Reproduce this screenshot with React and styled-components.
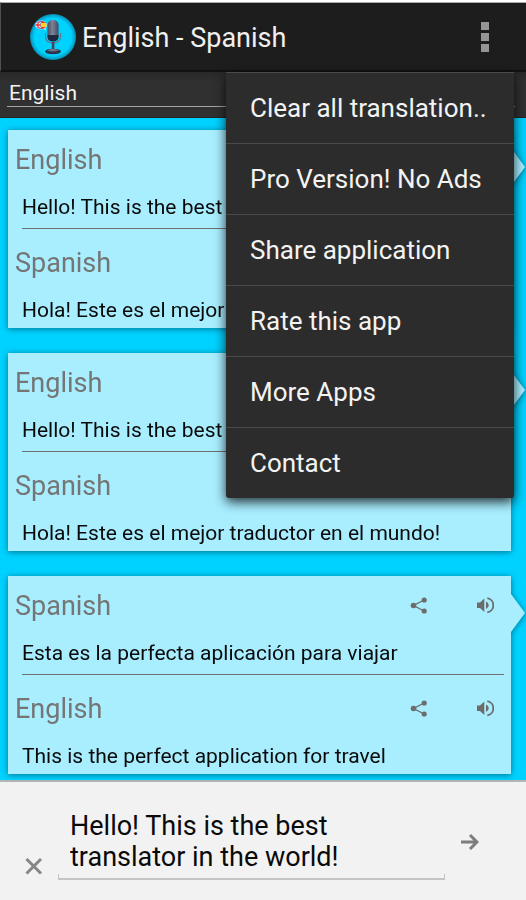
import React from "react";
import { createGlobalStyle, styled } from "styled-components";

const cards = [
  {
    id: 1,
    from: { language: "English", text: "Hello! This is the best traductor in the world!" },
    to: { language: "Spanish", text: "Hola! Este es el mejor traductor en el mundo!" },
  },
  {
    id: 2,
    from: { language: "English", text: "Hello! This is the best traductor in the world!" },
    to: { language: "Spanish", text: "Hola! Este es el mejor traductor en el mundo!" },
  },
  {
    id: 3,
    from: { language: "Spanish", text: "Esta es la perfecta aplicación para viajar" },
    to: { language: "English", text: "This is the perfect application for travel" },
  },
];

const menuItems = [
  "Clear all translation..",
  "Pro Version! No Ads",
  "Share application",
  "Rate this app",
  "More Apps",
  "Contact",
];

const AppLogo = () => (
  <svg width="48" height="48" viewBox="0 0 48 48" aria-hidden="true">
    <defs>
      <radialGradient id="disc">
        <stop offset="0.8" stopColor="#00d2ff" />
        <stop offset="1" stopColor="#078fb4" />
      </radialGradient>
      <linearGradient id="metal">
        <stop offset="0" stopColor="#3f4860" />
        <stop offset="0.45" stopColor="#8b90a2" />
        <stop offset="1" stopColor="#3b4259" />
      </linearGradient>
      <clipPath id="bubble">
        <ellipse cx="12" cy="12" rx="5.6" ry="4" />
      </clipPath>
    </defs>
    <circle cx="24" cy="24" r="23" fill="url(#disc)" />
    <path d="M13 15l4 2.6-.6-4z" fill="#cfd6dc" />
    <ellipse cx="12" cy="12" rx="6" ry="4.4" fill="#cfe6ee" />
    <g clipPath="url(#bubble)">
      <path d="M6 8h6v8H6z" fill="#5a6fb5" />
      <path d="M6 9l6 6M12 9l-6 6" stroke="#fff" strokeWidth="0.8" />
      <path d="M6 12h6M9 8v8" stroke="#fff" strokeWidth="2.4" />
      <path d="M6 12h6M9 8v8" stroke="#e0323c" strokeWidth="1.4" />
      <path d="M12 8h6v8h-6z" fill="#ffd21f" />
      <path d="M12 8h6v2h-6zM12 14h6v2h-6z" fill="#e43a32" />
    </g>
    <rect x="18.5" y="7" width="11" height="21" rx="5" fill="url(#metal)" />
    <path
      d="M20 10h8M19 12h10M19 14h10M19 16h10M19 18h10M19 20h10M21.500 8v13M24 7v14M26.500 8v13"
      stroke="#5a6277"
      strokeWidth="0.4"
    />
    <path d="M18.500 22h11v1.500q0 5-5.500 5t-5.500-5z" fill="#20283f" />
    <path d="M16.500 20v3q0 7 7.500 7t7.500-7v-3" fill="none" stroke="#6a7187" strokeWidth="1.2" />
    <path d="M22.800 29h2.600v8h-2.600z" fill="#3d455c" />
    <ellipse cx="24" cy="38.500" rx="8" ry="2.800" fill="#2c344b" />
    <path d="M18 37.500q6-3.500 12 0-6 2-12 0z" fill="#6d7489" />
  </svg>
);

const ShareIcon = () => (
  <svg width="18" height="18" viewBox="0 0 18 18" aria-hidden="true">
    <path d="M14.200 3L3.500 8.500 14.200 14" fill="none" stroke="#6c6c6c" strokeWidth="1.4" />
    <circle cx="14.200" cy="3" r="2.6" fill="#6c6c6c" />
    <circle cx="3.500" cy="8.500" r="2.8" fill="#6c6c6c" />
    <circle cx="14.200" cy="14" r="2.6" fill="#6c6c6c" />
  </svg>
);

const SpeakerIcon = () => (
  <svg width="18" height="18" viewBox="0 0 18 18" aria-hidden="true">
    <path d="M1 5.600h3L8.300 1.500v13.400L4 10.900H1z" fill="#6c6c6c" />
    <path d="M10 4.500Q12.700 5.800 12.700 8.200T10 12z" fill="#6c6c6c" />
    <path d="M11.300 1.200a7.200 7.200 0 0 1 0 14.200" fill="none" stroke="#6c6c6c" strokeWidth="1.8" />
  </svg>
);

const Entry = ({ language, text, divided }) => (
  <EntryWrap>
    <EntryHead>
      <EntryLanguage>{language}</EntryLanguage>
      <IconButton aria-label={`Share ${language} text`}>
        <ShareIcon />
      </IconButton>
      <IconButton aria-label={`Listen to ${language} text`}>
        <SpeakerIcon />
      </IconButton>
    </EntryHead>
    <EntryText $divided={divided}>{text}</EntryText>
  </EntryWrap>
);

const App = () => {
  return (
    <>
      <GlobalStyle />
      <Screen>
        <Header>
          <AppLogo />
          <Title>English - Spanish</Title>
          <MenuButton aria-label="More options" aria-expanded="true">
            <Dot />
            <Dot />
            <Dot />
          </MenuButton>
          <Menu>
            {menuItems.map((item) => (
              <MenuItem key={item}>{item}</MenuItem>
            ))}
          </Menu>
        </Header>
        <LanguageBar>
          <LanguageSelect aria-label="Translate from" defaultValue="English">
            <option>English</option>
            <option>Spanish</option>
          </LanguageSelect>
          <LanguageSelect aria-label="Translate to" defaultValue="Spanish">
            <option>English</option>
            <option>Spanish</option>
          </LanguageSelect>
        </LanguageBar>
        <List>
          {cards.map(({ id, from, to }) => (
            <Card key={id}>
              <Entry {...from} divided />
              <Entry {...to} />
            </Card>
          ))}
        </List>
        <Footer>
          <FooterButton aria-label="Clear text" $low>
            <svg width="18" height="18" viewBox="0 0 18 18" aria-hidden="true">
              <path d="M1.500 2l14.500 14.500M16 2L1.500 16.500" stroke="#868686" strokeWidth="3" />
            </svg>
          </FooterButton>
          <Field>
            <Input
              aria-label="Text to translate"
              rows={2}
              spellCheck={false}
              defaultValue={"Hello! This is the best\ntranslator in the world!"}
            />
          </Field>
          <FooterButton aria-label="Translate">
            <svg width="18" height="18" viewBox="0 0 18 18" aria-hidden="true">
              <path d="M0 10h15.500M9 3L16 10 9 17" fill="none" stroke="#7d7d7d" strokeWidth="3" />
            </svg>
          </FooterButton>
        </Footer>
      </Screen>
    </>
  );
};

const GlobalStyle = createGlobalStyle`
  * {
    box-sizing: border-box;
  }
  body {
    margin: 0;
    background: #fff;
    font-family: Roboto, sans-serif;
  }
  button, select, textarea {
    margin: 0;
    padding: 0;
    border: 0;
    background: none;
    font-family: inherit;
  }
`;

const Screen = styled.div`
  display: flex;
  flex-direction: column;
  min-height: 100vh;
  padding-top: 2px;
`;

const Header = styled.header`
  position: relative;
  z-index: 1;
  display: flex;
  align-items: center;
  gap: 5px;
  height: 70px;
  padding: 0 29px 0 28px;
  border-top: 1px solid #a9adb0;
  border-bottom: 2px solid #121212;
  border-left: 1px solid #4c5152;
  background: #1d1d1d;
`;

const Title = styled.h1`
  flex: 1;
  margin: 0;
  padding-top: 2px;
  color: #f0f0f0;
  font-size: 27px;
  font-weight: 400;
`;

const MenuButton = styled.button`
  display: flex;
  flex-direction: column;
  align-items: center;
  gap: 3px;
  width: 24px;
`;

const Dot = styled.span`
  width: 8px;
  height: 8px;
  background: #959595;
`;

const Menu = styled.div`
  position: absolute;
  top: 69px;
  right: 12px;
  width: 288px;
  border-radius: 0 0 3px 3px;
  background: #2c2c2c;
  box-shadow: 0 4px 12px rgba(0, 0, 0, 0.8);
`;

const MenuItem = styled.button`
  display: block;
  width: 100%;
  height: 71px;
  padding: 0 24px;
  border-top: 1px solid #4a4a4a;
  color: #f3f3f3;
  font-size: 26px;
  text-align: left;
  white-space: nowrap;
`;

const LanguageBar = styled.div`
  display: flex;
  gap: 12px;
  height: 46px;
  padding: 8px 11px 10px 7px;
  border-bottom: 1px solid #252525;
  background: linear-gradient(#282828, #303030 10px);
`;

const LanguageSelect = styled.select`
  flex: 1;
  appearance: none;
  border-bottom: 1px solid #a5a5a5;
  border-radius: 0;
  padding: 0 2px;
  color: #f3f3f3;
  font-size: 21px;
`;

const List = styled.main`
  display: flex;
  flex: 1;
  flex-direction: column;
  gap: 25px;
  padding: 12px 15px 6px 8px;
  background: #00d2ff;
`;

const Card = styled.article`
  position: relative;
  padding-bottom: 1px;
  background: #a8eeff;
  filter: drop-shadow(0 1px 3px rgba(0, 50, 70, 0.6));

  &::after {
    content: "";
    position: absolute;
    top: 18px;
    left: 100%;
    width: 14px;
    height: 38px;
    background: #a8eeff;
    clip-path: polygon(0 0, 100% 50%, 0 100%);
  }
`;

const EntryWrap = styled.section`
  & + & {
    padding-top: 4px;
  }
`;

const EntryHead = styled.div`
  display: flex;
  align-items: center;
  gap: 48px;
  height: 60px;
  padding: 0 17px 0 7px;
`;

const EntryLanguage = styled.h2`
  flex: 1;
  margin: 0;
  color: #757575;
  font-size: 27px;
  font-weight: 400;
`;

const IconButton = styled.button`
  display: flex;
`;

const EntryText = styled.p`
  margin: 0 7px 0 14px;
  padding-bottom: ${({ $divided }) => ($divided ? "4px" : "0")};
  border-bottom: ${({ $divided }) => ($divided ? "1px solid #6f6f6f" : "0")};
  color: #0a0a0a;
  font-size: 21px;
  line-height: 34px;
  white-space: nowrap;
`;

const Footer = styled.footer`
  display: flex;
  align-items: center;
  height: 120px;
  padding: 0 32px 0 9px;
  border-top: 2px solid #b3b7b8;
  background: #f2f2f2;
`;

const FooterButton = styled.button`
  display: flex;
  align-items: center;
  justify-content: center;
  width: 49px;
  height: ${({ $low }) => ($low ? "68px" : "48px")};
  align-self: ${({ $low }) => ($low ? "flex-end" : "center")};
`;

const Field = styled.div`
  flex: 1;
  align-self: flex-end;
  margin-bottom: 20px;
  padding: 0 11px 5px;
  border: solid #c4c4c4;
  border-width: 0 1px 2px;
  border-image: linear-gradient(to top, #c4c4c4 6px, transparent 6px) 2;
`;

const Input = styled.textarea`
  display: block;
  width: 100%;
  color: #0a0a0a;
  font-size: 27px;
  line-height: 31px;
  outline: none;
  overflow: hidden;
  resize: none;
`;

export default App;
